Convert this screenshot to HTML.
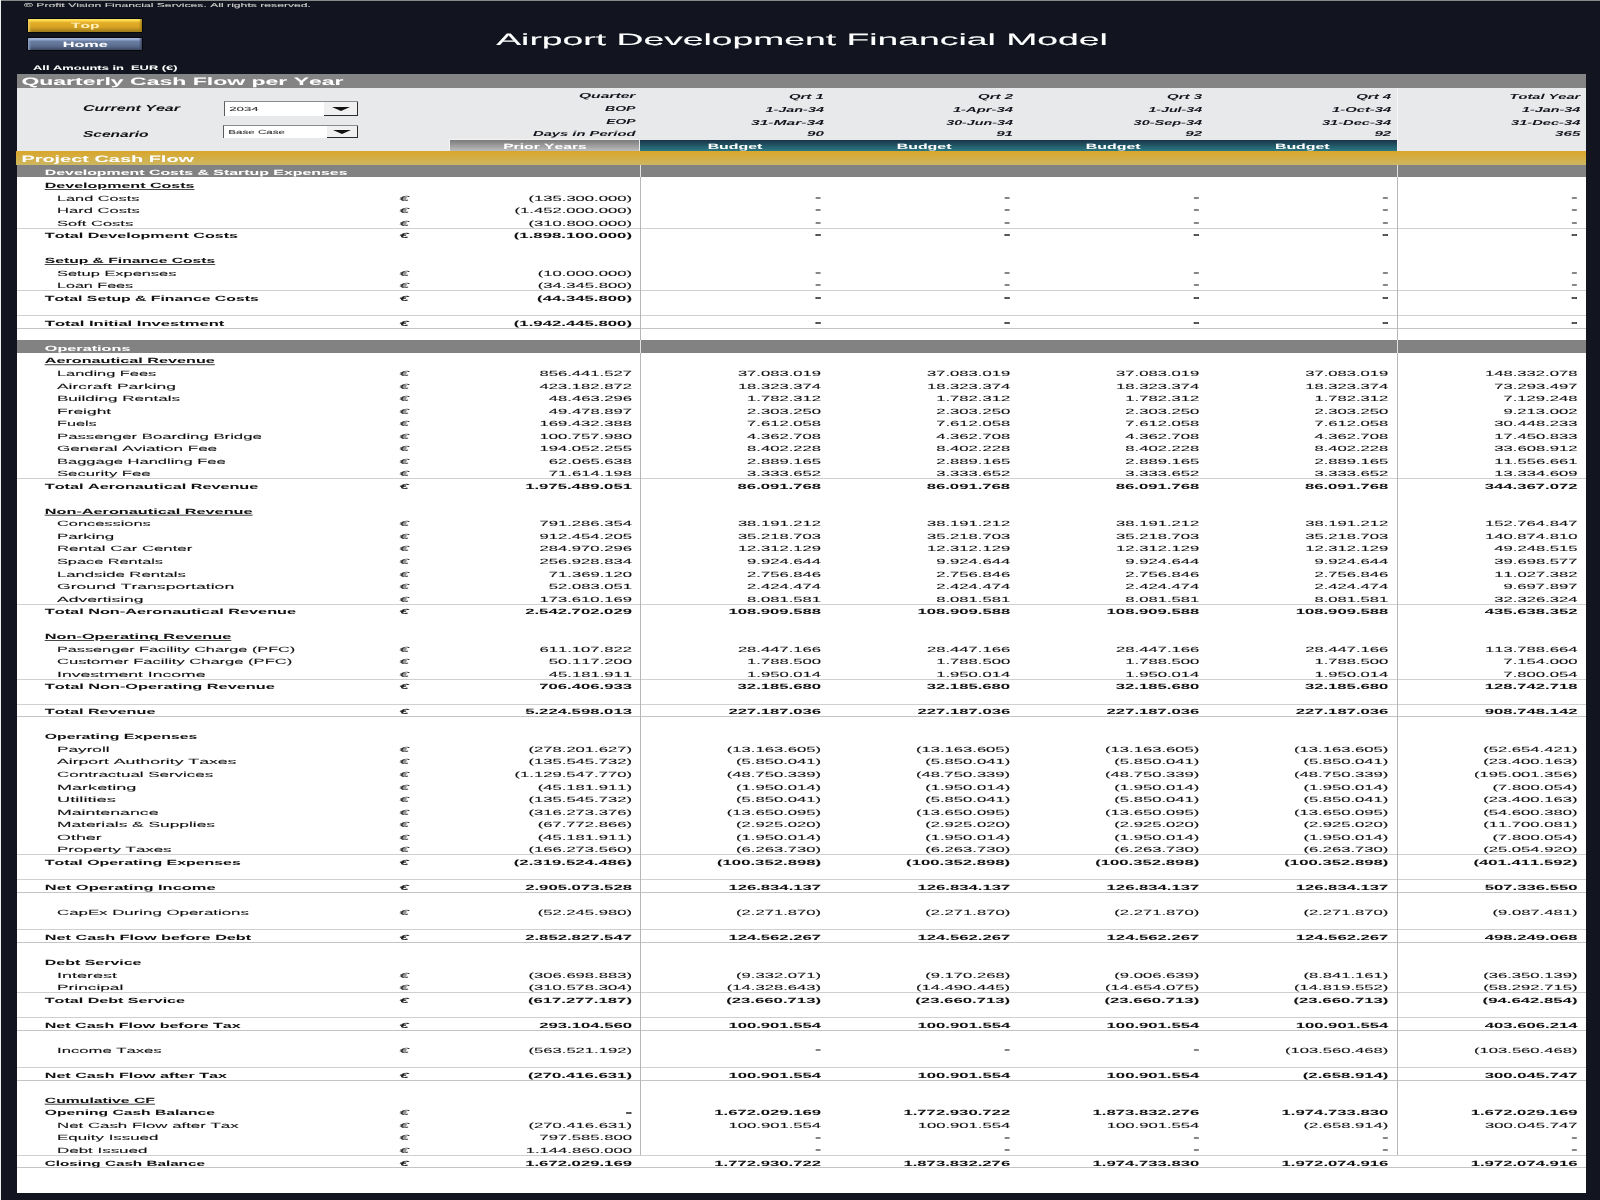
<!DOCTYPE html>
<html lang="en"><head><meta charset="utf-8"><title>Airport Development Financial Model</title>
<style>
html,body{margin:0;padding:0}
body{width:1600px;height:1200px;background:#12151f;position:relative;overflow:hidden;font-family:"Liberation Sans",sans-serif}
#shapes div{position:absolute}
.btn{position:absolute;left:27.8px;width:114.6px;border-radius:1px}
#top{top:18.5px;height:13.4px;background:linear-gradient(#ffec7a 0,#ffd94a 12%,#e3ae2a 28%,#d9a322 62%,#b98f20 80%,#96761a 100%);box-shadow:inset 2.5px 0 2px -1px #f3d060,inset -2.5px 0 2px -1px #a07c18,0 0 0 1px #06070b}
#home{top:37.7px;height:12.6px;background:linear-gradient(#b4c6ea 0,#98acd4 12%,#6b7fa3 28%,#5f7193 60%,#4f5f7d 82%,#36415a 100%);box-shadow:inset 2.5px 0 2px -1px #8fa2c6,inset -2.5px 0 2px -1px #3a4661,0 0 0 1px #06070b}
.dd{position:absolute;background:#fff;box-sizing:border-box;border-top:1px solid #8c8c8c;border-left:1px solid #5c5c5c}
.dd i{position:absolute;right:0;top:0;bottom:0;box-sizing:border-box;background:#f0f0f0;border-right:1.4px solid #2c2c2c;border-bottom:1px solid #2c2c2c}
.dd i:after{content:"";position:absolute;left:50%;top:50%;margin:-1.4px 0 0 -9px;border-left:9px solid transparent;border-right:9px solid transparent;border-top:4.2px solid #111}
svg{position:absolute;left:0;top:0;will-change:transform}
text{font-family:"Liberation Sans",sans-serif;white-space:pre;font-kerning:none;text-rendering:geometricPrecision;fill:currentColor;stroke:currentColor;stroke-width:.09px}
.b{font-weight:700;stroke-width:.03px}.d{stroke-width:.4px}.b.d{stroke-width:.45px}.i{font-style:italic}.u{text-decoration:underline}
</style></head><body>
<div id="shapes">
<div style="left:17.0px;top:74.0px;width:1569.0px;height:1118.6px;background:#fff"></div>
<div style="left:17.0px;top:88.0px;width:1569.0px;height:63.2px;background:#e8e9eb"></div>
<div style="left:17.0px;top:73.8px;width:1569.0px;height:14.4px;background:#848484"></div>
<div style="left:1397.0px;top:88.6px;width:1.0px;height:62.6px;background:#f6f6f6"></div>
<div style="left:0.0px;top:0.0px;width:1600.0px;height:1.0px;background:#8a8a8a"></div>
<div style="left:0.0px;top:0.0px;width:1.1px;height:1200.0px;background:#ededed"></div>
<div style="left:450.4px;top:139.9px;width:189.1px;height:11.4px;background:linear-gradient(#7b7b7b,#bcbcbc);box-shadow:-1px -1px 0 #f4f4f4"></div>
<div style="left:639.5px;top:139.8px;width:757.2px;height:11.5px;background:linear-gradient(#1a3348,#2a7a84)"></div>
<div style="left:16.0px;top:151.1px;width:1570.0px;height:14.0px;background:linear-gradient(#d9a62a,#d2b04a 60%,#ccb763)"></div>
<div style="left:17.0px;top:165.1px;width:1569.0px;height:12.0px;background:#828282"></div>
<div style="left:17.0px;top:340.0px;width:1569.0px;height:12.7px;background:#828282"></div>
<div style="left:17.0px;top:228.0px;width:1569.0px;height:1.0px;background:#d0d0d0"></div>
<div style="left:17.0px;top:290.0px;width:1569.0px;height:1.0px;background:#d0d0d0"></div>
<div style="left:17.0px;top:315.0px;width:1569.0px;height:1.0px;background:#d0d0d0"></div>
<div style="left:17.0px;top:478.0px;width:1569.0px;height:1.0px;background:#d0d0d0"></div>
<div style="left:17.0px;top:604.0px;width:1569.0px;height:1.0px;background:#d0d0d0"></div>
<div style="left:17.0px;top:679.0px;width:1569.0px;height:1.0px;background:#d0d0d0"></div>
<div style="left:17.0px;top:704.0px;width:1569.0px;height:1.0px;background:#d0d0d0"></div>
<div style="left:17.0px;top:854.0px;width:1569.0px;height:1.0px;background:#d0d0d0"></div>
<div style="left:17.0px;top:879.0px;width:1569.0px;height:1.0px;background:#d0d0d0"></div>
<div style="left:17.0px;top:929.0px;width:1569.0px;height:1.0px;background:#d0d0d0"></div>
<div style="left:17.0px;top:992.0px;width:1569.0px;height:1.0px;background:#d0d0d0"></div>
<div style="left:17.0px;top:1017.0px;width:1569.0px;height:1.0px;background:#d0d0d0"></div>
<div style="left:17.0px;top:1067.0px;width:1569.0px;height:1.0px;background:#d0d0d0"></div>
<div style="left:17.0px;top:1155.0px;width:1569.0px;height:1.0px;background:#d0d0d0"></div>
<div style="left:17.0px;top:328.0px;width:1569.0px;height:1.0px;background:#c4c4c4"></div>
<div style="left:17.0px;top:716.0px;width:1569.0px;height:1.0px;background:#c4c4c4"></div>
<div style="left:17.0px;top:892.0px;width:1569.0px;height:1.0px;background:#c4c4c4"></div>
<div style="left:17.0px;top:942.0px;width:1569.0px;height:1.0px;background:#c4c4c4"></div>
<div style="left:17.0px;top:1030.0px;width:1569.0px;height:1.0px;background:#c4c4c4"></div>
<div style="left:17.0px;top:1080.0px;width:1569.0px;height:1.0px;background:#c4c4c4"></div>
<div style="left:17.0px;top:1167.0px;width:1569.0px;height:1.0px;background:#c4c4c4"></div>
<div style="left:640.0px;top:177.1px;width:1.0px;height:977.9px;background:#b6b6b6"></div>
<div style="left:640.0px;top:165.1px;width:1.0px;height:12.0px;background:#e4e4e4"></div>
<div style="left:640.0px;top:340.0px;width:1.0px;height:12.7px;background:#e4e4e4"></div>
<div style="left:1397.0px;top:177.1px;width:1.0px;height:977.9px;background:#b6b6b6"></div>
<div style="left:1397.0px;top:165.1px;width:1.0px;height:12.0px;background:#e4e4e4"></div>
<div style="left:1397.0px;top:340.0px;width:1.0px;height:12.7px;background:#e4e4e4"></div>
</div>
<div class="btn" id="top"></div><div class="btn" id="home"></div>
<div class="dd" style="left:224px;top:100.8px;width:134.4px;height:14.8px"><i style="width:34.2px"></i></div>
<div class="dd" style="left:223px;top:124.6px;width:135.4px;height:13.4px"><i style="width:31px"></i></div>
<svg width="1600" height="1200" viewBox="0 0 1600 1200" font-size="7.6" color="#111" lengthAdjust="spacingAndGlyphs" xml:space="preserve">
<text lengthAdjust="spacingAndGlyphs" x="44.8" y="188.0" textLength="149.7" class="b u">Development Costs</text>
<text lengthAdjust="spacingAndGlyphs" x="57.0" y="200.5" textLength="82.3">Land Costs</text>
<text lengthAdjust="spacingAndGlyphs" x="404.2" y="200.5" textLength="9.4" text-anchor="middle" class="i" color="#222">€</text>
<text lengthAdjust="spacingAndGlyphs" x="632.0" y="200.5" textLength="103.5" text-anchor="end">(135.300.000)</text>
<text lengthAdjust="spacingAndGlyphs" x="820.9" y="199.7" textLength="5.7" text-anchor="end" class="d" color="#4a4a4a">-</text>
<text lengthAdjust="spacingAndGlyphs" x="1010.0" y="199.7" textLength="5.7" text-anchor="end" class="d" color="#4a4a4a">-</text>
<text lengthAdjust="spacingAndGlyphs" x="1199.1" y="199.7" textLength="5.7" text-anchor="end" class="d" color="#4a4a4a">-</text>
<text lengthAdjust="spacingAndGlyphs" x="1388.2" y="199.7" textLength="5.7" text-anchor="end" class="d" color="#4a4a4a">-</text>
<text lengthAdjust="spacingAndGlyphs" x="1577.3" y="199.7" textLength="5.7" text-anchor="end" class="d" color="#4a4a4a">-</text>
<text lengthAdjust="spacingAndGlyphs" x="57.0" y="213.0" textLength="82.8">Hard Costs</text>
<text lengthAdjust="spacingAndGlyphs" x="404.2" y="213.0" textLength="9.4" text-anchor="middle" class="i" color="#222">€</text>
<text lengthAdjust="spacingAndGlyphs" x="632.0" y="213.0" textLength="117.4" text-anchor="end">(1.452.000.000)</text>
<text lengthAdjust="spacingAndGlyphs" x="820.9" y="212.2" textLength="5.7" text-anchor="end" class="d" color="#4a4a4a">-</text>
<text lengthAdjust="spacingAndGlyphs" x="1010.0" y="212.2" textLength="5.7" text-anchor="end" class="d" color="#4a4a4a">-</text>
<text lengthAdjust="spacingAndGlyphs" x="1199.1" y="212.2" textLength="5.7" text-anchor="end" class="d" color="#4a4a4a">-</text>
<text lengthAdjust="spacingAndGlyphs" x="1388.2" y="212.2" textLength="5.7" text-anchor="end" class="d" color="#4a4a4a">-</text>
<text lengthAdjust="spacingAndGlyphs" x="1577.3" y="212.2" textLength="5.7" text-anchor="end" class="d" color="#4a4a4a">-</text>
<text lengthAdjust="spacingAndGlyphs" x="57.0" y="225.6" textLength="76.2">Soft Costs</text>
<text lengthAdjust="spacingAndGlyphs" x="404.2" y="225.6" textLength="9.4" text-anchor="middle" class="i" color="#222">€</text>
<text lengthAdjust="spacingAndGlyphs" x="632.0" y="225.6" textLength="103.5" text-anchor="end">(310.800.000)</text>
<text lengthAdjust="spacingAndGlyphs" x="820.9" y="224.8" textLength="5.7" text-anchor="end" class="d" color="#4a4a4a">-</text>
<text lengthAdjust="spacingAndGlyphs" x="1010.0" y="224.8" textLength="5.7" text-anchor="end" class="d" color="#4a4a4a">-</text>
<text lengthAdjust="spacingAndGlyphs" x="1199.1" y="224.8" textLength="5.7" text-anchor="end" class="d" color="#4a4a4a">-</text>
<text lengthAdjust="spacingAndGlyphs" x="1388.2" y="224.8" textLength="5.7" text-anchor="end" class="d" color="#4a4a4a">-</text>
<text lengthAdjust="spacingAndGlyphs" x="1577.3" y="224.8" textLength="5.7" text-anchor="end" class="d" color="#4a4a4a">-</text>
<text lengthAdjust="spacingAndGlyphs" x="44.8" y="238.1" textLength="193.2" class="b">Total Development Costs</text>
<text lengthAdjust="spacingAndGlyphs" x="404.2" y="238.1" textLength="9.4" text-anchor="middle" class="b i" color="#222">€</text>
<text lengthAdjust="spacingAndGlyphs" x="632.0" y="238.1" textLength="118.2" text-anchor="end" class="b">(1.898.100.000)</text>
<text lengthAdjust="spacingAndGlyphs" x="820.9" y="237.3" textLength="5.7" text-anchor="end" class="b d" color="#1a1a1a">-</text>
<text lengthAdjust="spacingAndGlyphs" x="1010.0" y="237.3" textLength="5.7" text-anchor="end" class="b d" color="#1a1a1a">-</text>
<text lengthAdjust="spacingAndGlyphs" x="1199.1" y="237.3" textLength="5.7" text-anchor="end" class="b d" color="#1a1a1a">-</text>
<text lengthAdjust="spacingAndGlyphs" x="1388.2" y="237.3" textLength="5.7" text-anchor="end" class="b d" color="#1a1a1a">-</text>
<text lengthAdjust="spacingAndGlyphs" x="1577.3" y="237.3" textLength="5.7" text-anchor="end" class="b d" color="#1a1a1a">-</text>
<text lengthAdjust="spacingAndGlyphs" x="44.8" y="263.2" textLength="170.4" class="b u">Setup &amp; Finance Costs</text>
<text lengthAdjust="spacingAndGlyphs" x="57.0" y="275.7" textLength="119.4">Setup Expenses</text>
<text lengthAdjust="spacingAndGlyphs" x="404.2" y="275.7" textLength="9.4" text-anchor="middle" class="i" color="#222">€</text>
<text lengthAdjust="spacingAndGlyphs" x="632.0" y="275.7" textLength="94.3" text-anchor="end">(10.000.000)</text>
<text lengthAdjust="spacingAndGlyphs" x="820.9" y="274.9" textLength="5.7" text-anchor="end" class="d" color="#4a4a4a">-</text>
<text lengthAdjust="spacingAndGlyphs" x="1010.0" y="274.9" textLength="5.7" text-anchor="end" class="d" color="#4a4a4a">-</text>
<text lengthAdjust="spacingAndGlyphs" x="1199.1" y="274.9" textLength="5.7" text-anchor="end" class="d" color="#4a4a4a">-</text>
<text lengthAdjust="spacingAndGlyphs" x="1388.2" y="274.9" textLength="5.7" text-anchor="end" class="d" color="#4a4a4a">-</text>
<text lengthAdjust="spacingAndGlyphs" x="1577.3" y="274.9" textLength="5.7" text-anchor="end" class="d" color="#4a4a4a">-</text>
<text lengthAdjust="spacingAndGlyphs" x="57.0" y="288.2" textLength="76.1">Loan Fees</text>
<text lengthAdjust="spacingAndGlyphs" x="404.2" y="288.2" textLength="9.4" text-anchor="middle" class="i" color="#222">€</text>
<text lengthAdjust="spacingAndGlyphs" x="632.0" y="288.2" textLength="94.3" text-anchor="end">(34.345.800)</text>
<text lengthAdjust="spacingAndGlyphs" x="820.9" y="287.4" textLength="5.7" text-anchor="end" class="d" color="#4a4a4a">-</text>
<text lengthAdjust="spacingAndGlyphs" x="1010.0" y="287.4" textLength="5.7" text-anchor="end" class="d" color="#4a4a4a">-</text>
<text lengthAdjust="spacingAndGlyphs" x="1199.1" y="287.4" textLength="5.7" text-anchor="end" class="d" color="#4a4a4a">-</text>
<text lengthAdjust="spacingAndGlyphs" x="1388.2" y="287.4" textLength="5.7" text-anchor="end" class="d" color="#4a4a4a">-</text>
<text lengthAdjust="spacingAndGlyphs" x="1577.3" y="287.4" textLength="5.7" text-anchor="end" class="d" color="#4a4a4a">-</text>
<text lengthAdjust="spacingAndGlyphs" x="44.8" y="300.8" textLength="213.9" class="b">Total Setup &amp; Finance Costs</text>
<text lengthAdjust="spacingAndGlyphs" x="404.2" y="300.8" textLength="9.4" text-anchor="middle" class="b i" color="#222">€</text>
<text lengthAdjust="spacingAndGlyphs" x="632.0" y="300.8" textLength="94.9" text-anchor="end" class="b">(44.345.800)</text>
<text lengthAdjust="spacingAndGlyphs" x="820.9" y="300.0" textLength="5.7" text-anchor="end" class="b d" color="#1a1a1a">-</text>
<text lengthAdjust="spacingAndGlyphs" x="1010.0" y="300.0" textLength="5.7" text-anchor="end" class="b d" color="#1a1a1a">-</text>
<text lengthAdjust="spacingAndGlyphs" x="1199.1" y="300.0" textLength="5.7" text-anchor="end" class="b d" color="#1a1a1a">-</text>
<text lengthAdjust="spacingAndGlyphs" x="1388.2" y="300.0" textLength="5.7" text-anchor="end" class="b d" color="#1a1a1a">-</text>
<text lengthAdjust="spacingAndGlyphs" x="1577.3" y="300.0" textLength="5.7" text-anchor="end" class="b d" color="#1a1a1a">-</text>
<text lengthAdjust="spacingAndGlyphs" x="44.8" y="325.8" textLength="179.5" class="b">Total Initial Investment</text>
<text lengthAdjust="spacingAndGlyphs" x="404.2" y="325.8" textLength="9.4" text-anchor="middle" class="b i" color="#222">€</text>
<text lengthAdjust="spacingAndGlyphs" x="632.0" y="325.8" textLength="118.2" text-anchor="end" class="b">(1.942.445.800)</text>
<text lengthAdjust="spacingAndGlyphs" x="820.9" y="325.0" textLength="5.7" text-anchor="end" class="b d" color="#1a1a1a">-</text>
<text lengthAdjust="spacingAndGlyphs" x="1010.0" y="325.0" textLength="5.7" text-anchor="end" class="b d" color="#1a1a1a">-</text>
<text lengthAdjust="spacingAndGlyphs" x="1199.1" y="325.0" textLength="5.7" text-anchor="end" class="b d" color="#1a1a1a">-</text>
<text lengthAdjust="spacingAndGlyphs" x="1388.2" y="325.0" textLength="5.7" text-anchor="end" class="b d" color="#1a1a1a">-</text>
<text lengthAdjust="spacingAndGlyphs" x="1577.3" y="325.0" textLength="5.7" text-anchor="end" class="b d" color="#1a1a1a">-</text>
<text lengthAdjust="spacingAndGlyphs" x="44.8" y="363.4" textLength="170.0" class="b u">Aeronautical Revenue</text>
<text lengthAdjust="spacingAndGlyphs" x="57.0" y="375.9" textLength="99.2">Landing Fees</text>
<text lengthAdjust="spacingAndGlyphs" x="404.2" y="375.9" textLength="9.4" text-anchor="middle" class="i" color="#222">€</text>
<text lengthAdjust="spacingAndGlyphs" x="632.0" y="375.9" textLength="92.5" text-anchor="end">856.441.527</text>
<text lengthAdjust="spacingAndGlyphs" x="821.1" y="375.9" textLength="83.2" text-anchor="end">37.083.019</text>
<text lengthAdjust="spacingAndGlyphs" x="1010.2" y="375.9" textLength="83.2" text-anchor="end">37.083.019</text>
<text lengthAdjust="spacingAndGlyphs" x="1199.3" y="375.9" textLength="83.2" text-anchor="end">37.083.019</text>
<text lengthAdjust="spacingAndGlyphs" x="1388.4" y="375.9" textLength="83.2" text-anchor="end">37.083.019</text>
<text lengthAdjust="spacingAndGlyphs" x="1577.5" y="375.9" textLength="92.5" text-anchor="end">148.332.078</text>
<text lengthAdjust="spacingAndGlyphs" x="57.0" y="388.5" textLength="119.0">Aircraft Parking</text>
<text lengthAdjust="spacingAndGlyphs" x="404.2" y="388.5" textLength="9.4" text-anchor="middle" class="i" color="#222">€</text>
<text lengthAdjust="spacingAndGlyphs" x="632.0" y="388.5" textLength="92.5" text-anchor="end">423.182.872</text>
<text lengthAdjust="spacingAndGlyphs" x="821.1" y="388.5" textLength="83.2" text-anchor="end">18.323.374</text>
<text lengthAdjust="spacingAndGlyphs" x="1010.2" y="388.5" textLength="83.2" text-anchor="end">18.323.374</text>
<text lengthAdjust="spacingAndGlyphs" x="1199.3" y="388.5" textLength="83.2" text-anchor="end">18.323.374</text>
<text lengthAdjust="spacingAndGlyphs" x="1388.4" y="388.5" textLength="83.2" text-anchor="end">18.323.374</text>
<text lengthAdjust="spacingAndGlyphs" x="1577.5" y="388.5" textLength="83.2" text-anchor="end">73.293.497</text>
<text lengthAdjust="spacingAndGlyphs" x="57.0" y="401.0" textLength="123.0">Building Rentals</text>
<text lengthAdjust="spacingAndGlyphs" x="404.2" y="401.0" textLength="9.4" text-anchor="middle" class="i" color="#222">€</text>
<text lengthAdjust="spacingAndGlyphs" x="632.0" y="401.0" textLength="83.2" text-anchor="end">48.463.296</text>
<text lengthAdjust="spacingAndGlyphs" x="821.1" y="401.0" textLength="74.0" text-anchor="end">1.782.312</text>
<text lengthAdjust="spacingAndGlyphs" x="1010.2" y="401.0" textLength="74.0" text-anchor="end">1.782.312</text>
<text lengthAdjust="spacingAndGlyphs" x="1199.3" y="401.0" textLength="74.0" text-anchor="end">1.782.312</text>
<text lengthAdjust="spacingAndGlyphs" x="1388.4" y="401.0" textLength="74.0" text-anchor="end">1.782.312</text>
<text lengthAdjust="spacingAndGlyphs" x="1577.5" y="401.0" textLength="74.0" text-anchor="end">7.129.248</text>
<text lengthAdjust="spacingAndGlyphs" x="57.0" y="413.5" textLength="54.2">Freight</text>
<text lengthAdjust="spacingAndGlyphs" x="404.2" y="413.5" textLength="9.4" text-anchor="middle" class="i" color="#222">€</text>
<text lengthAdjust="spacingAndGlyphs" x="632.0" y="413.5" textLength="83.2" text-anchor="end">49.478.897</text>
<text lengthAdjust="spacingAndGlyphs" x="821.1" y="413.5" textLength="74.0" text-anchor="end">2.303.250</text>
<text lengthAdjust="spacingAndGlyphs" x="1010.2" y="413.5" textLength="74.0" text-anchor="end">2.303.250</text>
<text lengthAdjust="spacingAndGlyphs" x="1199.3" y="413.5" textLength="74.0" text-anchor="end">2.303.250</text>
<text lengthAdjust="spacingAndGlyphs" x="1388.4" y="413.5" textLength="74.0" text-anchor="end">2.303.250</text>
<text lengthAdjust="spacingAndGlyphs" x="1577.5" y="413.5" textLength="74.0" text-anchor="end">9.213.002</text>
<text lengthAdjust="spacingAndGlyphs" x="57.0" y="426.1" textLength="39.7">Fuels</text>
<text lengthAdjust="spacingAndGlyphs" x="404.2" y="426.1" textLength="9.4" text-anchor="middle" class="i" color="#222">€</text>
<text lengthAdjust="spacingAndGlyphs" x="632.0" y="426.1" textLength="92.5" text-anchor="end">169.432.388</text>
<text lengthAdjust="spacingAndGlyphs" x="821.1" y="426.1" textLength="74.0" text-anchor="end">7.612.058</text>
<text lengthAdjust="spacingAndGlyphs" x="1010.2" y="426.1" textLength="74.0" text-anchor="end">7.612.058</text>
<text lengthAdjust="spacingAndGlyphs" x="1199.3" y="426.1" textLength="74.0" text-anchor="end">7.612.058</text>
<text lengthAdjust="spacingAndGlyphs" x="1388.4" y="426.1" textLength="74.0" text-anchor="end">7.612.058</text>
<text lengthAdjust="spacingAndGlyphs" x="1577.5" y="426.1" textLength="83.2" text-anchor="end">30.448.233</text>
<text lengthAdjust="spacingAndGlyphs" x="57.0" y="438.6" textLength="204.8">Passenger Boarding Bridge</text>
<text lengthAdjust="spacingAndGlyphs" x="404.2" y="438.6" textLength="9.4" text-anchor="middle" class="i" color="#222">€</text>
<text lengthAdjust="spacingAndGlyphs" x="632.0" y="438.6" textLength="92.5" text-anchor="end">100.757.980</text>
<text lengthAdjust="spacingAndGlyphs" x="821.1" y="438.6" textLength="74.0" text-anchor="end">4.362.708</text>
<text lengthAdjust="spacingAndGlyphs" x="1010.2" y="438.6" textLength="74.0" text-anchor="end">4.362.708</text>
<text lengthAdjust="spacingAndGlyphs" x="1199.3" y="438.6" textLength="74.0" text-anchor="end">4.362.708</text>
<text lengthAdjust="spacingAndGlyphs" x="1388.4" y="438.6" textLength="74.0" text-anchor="end">4.362.708</text>
<text lengthAdjust="spacingAndGlyphs" x="1577.5" y="438.6" textLength="83.2" text-anchor="end">17.450.833</text>
<text lengthAdjust="spacingAndGlyphs" x="57.0" y="451.1" textLength="160.1">General Aviation Fee</text>
<text lengthAdjust="spacingAndGlyphs" x="404.2" y="451.1" textLength="9.4" text-anchor="middle" class="i" color="#222">€</text>
<text lengthAdjust="spacingAndGlyphs" x="632.0" y="451.1" textLength="92.5" text-anchor="end">194.052.255</text>
<text lengthAdjust="spacingAndGlyphs" x="821.1" y="451.1" textLength="74.0" text-anchor="end">8.402.228</text>
<text lengthAdjust="spacingAndGlyphs" x="1010.2" y="451.1" textLength="74.0" text-anchor="end">8.402.228</text>
<text lengthAdjust="spacingAndGlyphs" x="1199.3" y="451.1" textLength="74.0" text-anchor="end">8.402.228</text>
<text lengthAdjust="spacingAndGlyphs" x="1388.4" y="451.1" textLength="74.0" text-anchor="end">8.402.228</text>
<text lengthAdjust="spacingAndGlyphs" x="1577.5" y="451.1" textLength="83.2" text-anchor="end">33.608.912</text>
<text lengthAdjust="spacingAndGlyphs" x="57.0" y="463.7" textLength="168.7">Baggage Handling Fee</text>
<text lengthAdjust="spacingAndGlyphs" x="404.2" y="463.7" textLength="9.4" text-anchor="middle" class="i" color="#222">€</text>
<text lengthAdjust="spacingAndGlyphs" x="632.0" y="463.7" textLength="83.2" text-anchor="end">62.065.638</text>
<text lengthAdjust="spacingAndGlyphs" x="821.1" y="463.7" textLength="74.0" text-anchor="end">2.889.165</text>
<text lengthAdjust="spacingAndGlyphs" x="1010.2" y="463.7" textLength="74.0" text-anchor="end">2.889.165</text>
<text lengthAdjust="spacingAndGlyphs" x="1199.3" y="463.7" textLength="74.0" text-anchor="end">2.889.165</text>
<text lengthAdjust="spacingAndGlyphs" x="1388.4" y="463.7" textLength="74.0" text-anchor="end">2.889.165</text>
<text lengthAdjust="spacingAndGlyphs" x="1577.5" y="463.7" textLength="83.2" text-anchor="end">11.556.661</text>
<text lengthAdjust="spacingAndGlyphs" x="57.0" y="476.2" textLength="93.6">Security Fee</text>
<text lengthAdjust="spacingAndGlyphs" x="404.2" y="476.2" textLength="9.4" text-anchor="middle" class="i" color="#222">€</text>
<text lengthAdjust="spacingAndGlyphs" x="632.0" y="476.2" textLength="83.2" text-anchor="end">71.614.198</text>
<text lengthAdjust="spacingAndGlyphs" x="821.1" y="476.2" textLength="74.0" text-anchor="end">3.333.652</text>
<text lengthAdjust="spacingAndGlyphs" x="1010.2" y="476.2" textLength="74.0" text-anchor="end">3.333.652</text>
<text lengthAdjust="spacingAndGlyphs" x="1199.3" y="476.2" textLength="74.0" text-anchor="end">3.333.652</text>
<text lengthAdjust="spacingAndGlyphs" x="1388.4" y="476.2" textLength="74.0" text-anchor="end">3.333.652</text>
<text lengthAdjust="spacingAndGlyphs" x="1577.5" y="476.2" textLength="83.2" text-anchor="end">13.334.609</text>
<text lengthAdjust="spacingAndGlyphs" x="44.8" y="488.7" textLength="213.5" class="b">Total Aeronautical Revenue</text>
<text lengthAdjust="spacingAndGlyphs" x="404.2" y="488.7" textLength="9.4" text-anchor="middle" class="b i" color="#222">€</text>
<text lengthAdjust="spacingAndGlyphs" x="632.0" y="488.7" textLength="106.8" text-anchor="end" class="b">1.975.489.051</text>
<text lengthAdjust="spacingAndGlyphs" x="821.1" y="488.7" textLength="83.5" text-anchor="end" class="b">86.091.768</text>
<text lengthAdjust="spacingAndGlyphs" x="1010.2" y="488.7" textLength="83.5" text-anchor="end" class="b">86.091.768</text>
<text lengthAdjust="spacingAndGlyphs" x="1199.3" y="488.7" textLength="83.5" text-anchor="end" class="b">86.091.768</text>
<text lengthAdjust="spacingAndGlyphs" x="1388.4" y="488.7" textLength="83.5" text-anchor="end" class="b">86.091.768</text>
<text lengthAdjust="spacingAndGlyphs" x="1577.5" y="488.7" textLength="92.7" text-anchor="end" class="b">344.367.072</text>
<text lengthAdjust="spacingAndGlyphs" x="44.8" y="513.8" textLength="207.8" class="b u">Non-Aeronautical Revenue</text>
<text lengthAdjust="spacingAndGlyphs" x="57.0" y="526.3" textLength="93.8">Concessions</text>
<text lengthAdjust="spacingAndGlyphs" x="404.2" y="526.3" textLength="9.4" text-anchor="middle" class="i" color="#222">€</text>
<text lengthAdjust="spacingAndGlyphs" x="632.0" y="526.3" textLength="92.5" text-anchor="end">791.286.354</text>
<text lengthAdjust="spacingAndGlyphs" x="821.1" y="526.3" textLength="83.2" text-anchor="end">38.191.212</text>
<text lengthAdjust="spacingAndGlyphs" x="1010.2" y="526.3" textLength="83.2" text-anchor="end">38.191.212</text>
<text lengthAdjust="spacingAndGlyphs" x="1199.3" y="526.3" textLength="83.2" text-anchor="end">38.191.212</text>
<text lengthAdjust="spacingAndGlyphs" x="1388.4" y="526.3" textLength="83.2" text-anchor="end">38.191.212</text>
<text lengthAdjust="spacingAndGlyphs" x="1577.5" y="526.3" textLength="92.5" text-anchor="end">152.764.847</text>
<text lengthAdjust="spacingAndGlyphs" x="57.0" y="538.9" textLength="57.2">Parking</text>
<text lengthAdjust="spacingAndGlyphs" x="404.2" y="538.9" textLength="9.4" text-anchor="middle" class="i" color="#222">€</text>
<text lengthAdjust="spacingAndGlyphs" x="632.0" y="538.9" textLength="92.5" text-anchor="end">912.454.205</text>
<text lengthAdjust="spacingAndGlyphs" x="821.1" y="538.9" textLength="83.2" text-anchor="end">35.218.703</text>
<text lengthAdjust="spacingAndGlyphs" x="1010.2" y="538.9" textLength="83.2" text-anchor="end">35.218.703</text>
<text lengthAdjust="spacingAndGlyphs" x="1199.3" y="538.9" textLength="83.2" text-anchor="end">35.218.703</text>
<text lengthAdjust="spacingAndGlyphs" x="1388.4" y="538.9" textLength="83.2" text-anchor="end">35.218.703</text>
<text lengthAdjust="spacingAndGlyphs" x="1577.5" y="538.9" textLength="92.5" text-anchor="end">140.874.810</text>
<text lengthAdjust="spacingAndGlyphs" x="57.0" y="551.4" textLength="135.3">Rental Car Center</text>
<text lengthAdjust="spacingAndGlyphs" x="404.2" y="551.4" textLength="9.4" text-anchor="middle" class="i" color="#222">€</text>
<text lengthAdjust="spacingAndGlyphs" x="632.0" y="551.4" textLength="92.5" text-anchor="end">284.970.296</text>
<text lengthAdjust="spacingAndGlyphs" x="821.1" y="551.4" textLength="83.2" text-anchor="end">12.312.129</text>
<text lengthAdjust="spacingAndGlyphs" x="1010.2" y="551.4" textLength="83.2" text-anchor="end">12.312.129</text>
<text lengthAdjust="spacingAndGlyphs" x="1199.3" y="551.4" textLength="83.2" text-anchor="end">12.312.129</text>
<text lengthAdjust="spacingAndGlyphs" x="1388.4" y="551.4" textLength="83.2" text-anchor="end">12.312.129</text>
<text lengthAdjust="spacingAndGlyphs" x="1577.5" y="551.4" textLength="83.2" text-anchor="end">49.248.515</text>
<text lengthAdjust="spacingAndGlyphs" x="57.0" y="563.9" textLength="106.0">Space Rentals</text>
<text lengthAdjust="spacingAndGlyphs" x="404.2" y="563.9" textLength="9.4" text-anchor="middle" class="i" color="#222">€</text>
<text lengthAdjust="spacingAndGlyphs" x="632.0" y="563.9" textLength="92.5" text-anchor="end">256.928.834</text>
<text lengthAdjust="spacingAndGlyphs" x="821.1" y="563.9" textLength="74.0" text-anchor="end">9.924.644</text>
<text lengthAdjust="spacingAndGlyphs" x="1010.2" y="563.9" textLength="74.0" text-anchor="end">9.924.644</text>
<text lengthAdjust="spacingAndGlyphs" x="1199.3" y="563.9" textLength="74.0" text-anchor="end">9.924.644</text>
<text lengthAdjust="spacingAndGlyphs" x="1388.4" y="563.9" textLength="74.0" text-anchor="end">9.924.644</text>
<text lengthAdjust="spacingAndGlyphs" x="1577.5" y="563.9" textLength="83.2" text-anchor="end">39.698.577</text>
<text lengthAdjust="spacingAndGlyphs" x="57.0" y="576.5" textLength="128.9">Landside Rentals</text>
<text lengthAdjust="spacingAndGlyphs" x="404.2" y="576.5" textLength="9.4" text-anchor="middle" class="i" color="#222">€</text>
<text lengthAdjust="spacingAndGlyphs" x="632.0" y="576.5" textLength="83.2" text-anchor="end">71.369.120</text>
<text lengthAdjust="spacingAndGlyphs" x="821.1" y="576.5" textLength="74.0" text-anchor="end">2.756.846</text>
<text lengthAdjust="spacingAndGlyphs" x="1010.2" y="576.5" textLength="74.0" text-anchor="end">2.756.846</text>
<text lengthAdjust="spacingAndGlyphs" x="1199.3" y="576.5" textLength="74.0" text-anchor="end">2.756.846</text>
<text lengthAdjust="spacingAndGlyphs" x="1388.4" y="576.5" textLength="74.0" text-anchor="end">2.756.846</text>
<text lengthAdjust="spacingAndGlyphs" x="1577.5" y="576.5" textLength="83.2" text-anchor="end">11.027.382</text>
<text lengthAdjust="spacingAndGlyphs" x="57.0" y="589.0" textLength="177.2">Ground Transportation</text>
<text lengthAdjust="spacingAndGlyphs" x="404.2" y="589.0" textLength="9.4" text-anchor="middle" class="i" color="#222">€</text>
<text lengthAdjust="spacingAndGlyphs" x="632.0" y="589.0" textLength="83.2" text-anchor="end">52.083.051</text>
<text lengthAdjust="spacingAndGlyphs" x="821.1" y="589.0" textLength="74.0" text-anchor="end">2.424.474</text>
<text lengthAdjust="spacingAndGlyphs" x="1010.2" y="589.0" textLength="74.0" text-anchor="end">2.424.474</text>
<text lengthAdjust="spacingAndGlyphs" x="1199.3" y="589.0" textLength="74.0" text-anchor="end">2.424.474</text>
<text lengthAdjust="spacingAndGlyphs" x="1388.4" y="589.0" textLength="74.0" text-anchor="end">2.424.474</text>
<text lengthAdjust="spacingAndGlyphs" x="1577.5" y="589.0" textLength="74.0" text-anchor="end">9.697.897</text>
<text lengthAdjust="spacingAndGlyphs" x="57.0" y="601.5" textLength="86.6">Advertising</text>
<text lengthAdjust="spacingAndGlyphs" x="404.2" y="601.5" textLength="9.4" text-anchor="middle" class="i" color="#222">€</text>
<text lengthAdjust="spacingAndGlyphs" x="632.0" y="601.5" textLength="92.5" text-anchor="end">173.610.169</text>
<text lengthAdjust="spacingAndGlyphs" x="821.1" y="601.5" textLength="74.0" text-anchor="end">8.081.581</text>
<text lengthAdjust="spacingAndGlyphs" x="1010.2" y="601.5" textLength="74.0" text-anchor="end">8.081.581</text>
<text lengthAdjust="spacingAndGlyphs" x="1199.3" y="601.5" textLength="74.0" text-anchor="end">8.081.581</text>
<text lengthAdjust="spacingAndGlyphs" x="1388.4" y="601.5" textLength="74.0" text-anchor="end">8.081.581</text>
<text lengthAdjust="spacingAndGlyphs" x="1577.5" y="601.5" textLength="83.2" text-anchor="end">32.326.324</text>
<text lengthAdjust="spacingAndGlyphs" x="44.8" y="614.1" textLength="251.3" class="b">Total Non-Aeronautical Revenue</text>
<text lengthAdjust="spacingAndGlyphs" x="404.2" y="614.1" textLength="9.4" text-anchor="middle" class="b i" color="#222">€</text>
<text lengthAdjust="spacingAndGlyphs" x="632.0" y="614.1" textLength="106.8" text-anchor="end" class="b">2.542.702.029</text>
<text lengthAdjust="spacingAndGlyphs" x="821.1" y="614.1" textLength="92.7" text-anchor="end" class="b">108.909.588</text>
<text lengthAdjust="spacingAndGlyphs" x="1010.2" y="614.1" textLength="92.7" text-anchor="end" class="b">108.909.588</text>
<text lengthAdjust="spacingAndGlyphs" x="1199.3" y="614.1" textLength="92.7" text-anchor="end" class="b">108.909.588</text>
<text lengthAdjust="spacingAndGlyphs" x="1388.4" y="614.1" textLength="92.7" text-anchor="end" class="b">108.909.588</text>
<text lengthAdjust="spacingAndGlyphs" x="1577.5" y="614.1" textLength="92.7" text-anchor="end" class="b">435.638.352</text>
<text lengthAdjust="spacingAndGlyphs" x="44.8" y="639.1" textLength="186.5" class="b u">Non-Operating Revenue</text>
<text lengthAdjust="spacingAndGlyphs" x="57.0" y="651.7" textLength="238.2">Passenger Facility Charge (PFC)</text>
<text lengthAdjust="spacingAndGlyphs" x="404.2" y="651.7" textLength="9.4" text-anchor="middle" class="i" color="#222">€</text>
<text lengthAdjust="spacingAndGlyphs" x="632.0" y="651.7" textLength="92.5" text-anchor="end">611.107.822</text>
<text lengthAdjust="spacingAndGlyphs" x="821.1" y="651.7" textLength="83.2" text-anchor="end">28.447.166</text>
<text lengthAdjust="spacingAndGlyphs" x="1010.2" y="651.7" textLength="83.2" text-anchor="end">28.447.166</text>
<text lengthAdjust="spacingAndGlyphs" x="1199.3" y="651.7" textLength="83.2" text-anchor="end">28.447.166</text>
<text lengthAdjust="spacingAndGlyphs" x="1388.4" y="651.7" textLength="83.2" text-anchor="end">28.447.166</text>
<text lengthAdjust="spacingAndGlyphs" x="1577.5" y="651.7" textLength="92.5" text-anchor="end">113.788.664</text>
<text lengthAdjust="spacingAndGlyphs" x="57.0" y="664.2" textLength="235.2">Customer Facility Charge (PFC)</text>
<text lengthAdjust="spacingAndGlyphs" x="404.2" y="664.2" textLength="9.4" text-anchor="middle" class="i" color="#222">€</text>
<text lengthAdjust="spacingAndGlyphs" x="632.0" y="664.2" textLength="83.2" text-anchor="end">50.117.200</text>
<text lengthAdjust="spacingAndGlyphs" x="821.1" y="664.2" textLength="74.0" text-anchor="end">1.788.500</text>
<text lengthAdjust="spacingAndGlyphs" x="1010.2" y="664.2" textLength="74.0" text-anchor="end">1.788.500</text>
<text lengthAdjust="spacingAndGlyphs" x="1199.3" y="664.2" textLength="74.0" text-anchor="end">1.788.500</text>
<text lengthAdjust="spacingAndGlyphs" x="1388.4" y="664.2" textLength="74.0" text-anchor="end">1.788.500</text>
<text lengthAdjust="spacingAndGlyphs" x="1577.5" y="664.2" textLength="74.0" text-anchor="end">7.154.000</text>
<text lengthAdjust="spacingAndGlyphs" x="57.0" y="676.7" textLength="148.5">Investment Income</text>
<text lengthAdjust="spacingAndGlyphs" x="404.2" y="676.7" textLength="9.4" text-anchor="middle" class="i" color="#222">€</text>
<text lengthAdjust="spacingAndGlyphs" x="632.0" y="676.7" textLength="83.2" text-anchor="end">45.181.911</text>
<text lengthAdjust="spacingAndGlyphs" x="821.1" y="676.7" textLength="74.0" text-anchor="end">1.950.014</text>
<text lengthAdjust="spacingAndGlyphs" x="1010.2" y="676.7" textLength="74.0" text-anchor="end">1.950.014</text>
<text lengthAdjust="spacingAndGlyphs" x="1199.3" y="676.7" textLength="74.0" text-anchor="end">1.950.014</text>
<text lengthAdjust="spacingAndGlyphs" x="1388.4" y="676.7" textLength="74.0" text-anchor="end">1.950.014</text>
<text lengthAdjust="spacingAndGlyphs" x="1577.5" y="676.7" textLength="74.0" text-anchor="end">7.800.054</text>
<text lengthAdjust="spacingAndGlyphs" x="44.8" y="689.2" textLength="230.0" class="b">Total Non-Operating Revenue</text>
<text lengthAdjust="spacingAndGlyphs" x="404.2" y="689.2" textLength="9.4" text-anchor="middle" class="b i" color="#222">€</text>
<text lengthAdjust="spacingAndGlyphs" x="632.0" y="689.2" textLength="92.7" text-anchor="end" class="b">706.406.933</text>
<text lengthAdjust="spacingAndGlyphs" x="821.1" y="689.2" textLength="83.5" text-anchor="end" class="b">32.185.680</text>
<text lengthAdjust="spacingAndGlyphs" x="1010.2" y="689.2" textLength="83.5" text-anchor="end" class="b">32.185.680</text>
<text lengthAdjust="spacingAndGlyphs" x="1199.3" y="689.2" textLength="83.5" text-anchor="end" class="b">32.185.680</text>
<text lengthAdjust="spacingAndGlyphs" x="1388.4" y="689.2" textLength="83.5" text-anchor="end" class="b">32.185.680</text>
<text lengthAdjust="spacingAndGlyphs" x="1577.5" y="689.2" textLength="92.7" text-anchor="end" class="b">128.742.718</text>
<text lengthAdjust="spacingAndGlyphs" x="44.8" y="714.3" textLength="110.6" class="b">Total Revenue</text>
<text lengthAdjust="spacingAndGlyphs" x="404.2" y="714.3" textLength="9.4" text-anchor="middle" class="b i" color="#222">€</text>
<text lengthAdjust="spacingAndGlyphs" x="632.0" y="714.3" textLength="106.8" text-anchor="end" class="b">5.224.598.013</text>
<text lengthAdjust="spacingAndGlyphs" x="821.1" y="714.3" textLength="92.7" text-anchor="end" class="b">227.187.036</text>
<text lengthAdjust="spacingAndGlyphs" x="1010.2" y="714.3" textLength="92.7" text-anchor="end" class="b">227.187.036</text>
<text lengthAdjust="spacingAndGlyphs" x="1199.3" y="714.3" textLength="92.7" text-anchor="end" class="b">227.187.036</text>
<text lengthAdjust="spacingAndGlyphs" x="1388.4" y="714.3" textLength="92.7" text-anchor="end" class="b">227.187.036</text>
<text lengthAdjust="spacingAndGlyphs" x="1577.5" y="714.3" textLength="92.7" text-anchor="end" class="b">908.748.142</text>
<text lengthAdjust="spacingAndGlyphs" x="44.8" y="739.4" textLength="152.5" class="b">Operating Expenses</text>
<text lengthAdjust="spacingAndGlyphs" x="57.0" y="751.9" textLength="52.6">Payroll</text>
<text lengthAdjust="spacingAndGlyphs" x="404.2" y="751.9" textLength="9.4" text-anchor="middle" class="i" color="#222">€</text>
<text lengthAdjust="spacingAndGlyphs" x="632.0" y="751.9" textLength="103.5" text-anchor="end">(278.201.627)</text>
<text lengthAdjust="spacingAndGlyphs" x="821.1" y="751.9" textLength="94.3" text-anchor="end">(13.163.605)</text>
<text lengthAdjust="spacingAndGlyphs" x="1010.2" y="751.9" textLength="94.3" text-anchor="end">(13.163.605)</text>
<text lengthAdjust="spacingAndGlyphs" x="1199.3" y="751.9" textLength="94.3" text-anchor="end">(13.163.605)</text>
<text lengthAdjust="spacingAndGlyphs" x="1388.4" y="751.9" textLength="94.3" text-anchor="end">(13.163.605)</text>
<text lengthAdjust="spacingAndGlyphs" x="1577.5" y="751.9" textLength="94.3" text-anchor="end">(52.654.421)</text>
<text lengthAdjust="spacingAndGlyphs" x="57.0" y="764.4" textLength="179.4">Airport Authority Taxes</text>
<text lengthAdjust="spacingAndGlyphs" x="404.2" y="764.4" textLength="9.4" text-anchor="middle" class="i" color="#222">€</text>
<text lengthAdjust="spacingAndGlyphs" x="632.0" y="764.4" textLength="103.5" text-anchor="end">(135.545.732)</text>
<text lengthAdjust="spacingAndGlyphs" x="821.1" y="764.4" textLength="85.0" text-anchor="end">(5.850.041)</text>
<text lengthAdjust="spacingAndGlyphs" x="1010.2" y="764.4" textLength="85.0" text-anchor="end">(5.850.041)</text>
<text lengthAdjust="spacingAndGlyphs" x="1199.3" y="764.4" textLength="85.0" text-anchor="end">(5.850.041)</text>
<text lengthAdjust="spacingAndGlyphs" x="1388.4" y="764.4" textLength="85.0" text-anchor="end">(5.850.041)</text>
<text lengthAdjust="spacingAndGlyphs" x="1577.5" y="764.4" textLength="94.3" text-anchor="end">(23.400.163)</text>
<text lengthAdjust="spacingAndGlyphs" x="57.0" y="777.0" textLength="156.2">Contractual Services</text>
<text lengthAdjust="spacingAndGlyphs" x="404.2" y="777.0" textLength="9.4" text-anchor="middle" class="i" color="#222">€</text>
<text lengthAdjust="spacingAndGlyphs" x="632.0" y="777.0" textLength="117.4" text-anchor="end">(1.129.547.770)</text>
<text lengthAdjust="spacingAndGlyphs" x="821.1" y="777.0" textLength="94.3" text-anchor="end">(48.750.339)</text>
<text lengthAdjust="spacingAndGlyphs" x="1010.2" y="777.0" textLength="94.3" text-anchor="end">(48.750.339)</text>
<text lengthAdjust="spacingAndGlyphs" x="1199.3" y="777.0" textLength="94.3" text-anchor="end">(48.750.339)</text>
<text lengthAdjust="spacingAndGlyphs" x="1388.4" y="777.0" textLength="94.3" text-anchor="end">(48.750.339)</text>
<text lengthAdjust="spacingAndGlyphs" x="1577.5" y="777.0" textLength="103.5" text-anchor="end">(195.001.356)</text>
<text lengthAdjust="spacingAndGlyphs" x="57.0" y="789.5" textLength="79.3">Marketing</text>
<text lengthAdjust="spacingAndGlyphs" x="404.2" y="789.5" textLength="9.4" text-anchor="middle" class="i" color="#222">€</text>
<text lengthAdjust="spacingAndGlyphs" x="632.0" y="789.5" textLength="94.3" text-anchor="end">(45.181.911)</text>
<text lengthAdjust="spacingAndGlyphs" x="821.1" y="789.5" textLength="85.0" text-anchor="end">(1.950.014)</text>
<text lengthAdjust="spacingAndGlyphs" x="1010.2" y="789.5" textLength="85.0" text-anchor="end">(1.950.014)</text>
<text lengthAdjust="spacingAndGlyphs" x="1199.3" y="789.5" textLength="85.0" text-anchor="end">(1.950.014)</text>
<text lengthAdjust="spacingAndGlyphs" x="1388.4" y="789.5" textLength="85.0" text-anchor="end">(1.950.014)</text>
<text lengthAdjust="spacingAndGlyphs" x="1577.5" y="789.5" textLength="85.0" text-anchor="end">(7.800.054)</text>
<text lengthAdjust="spacingAndGlyphs" x="57.0" y="802.0" textLength="58.9">Utilities</text>
<text lengthAdjust="spacingAndGlyphs" x="404.2" y="802.0" textLength="9.4" text-anchor="middle" class="i" color="#222">€</text>
<text lengthAdjust="spacingAndGlyphs" x="632.0" y="802.0" textLength="103.5" text-anchor="end">(135.545.732)</text>
<text lengthAdjust="spacingAndGlyphs" x="821.1" y="802.0" textLength="85.0" text-anchor="end">(5.850.041)</text>
<text lengthAdjust="spacingAndGlyphs" x="1010.2" y="802.0" textLength="85.0" text-anchor="end">(5.850.041)</text>
<text lengthAdjust="spacingAndGlyphs" x="1199.3" y="802.0" textLength="85.0" text-anchor="end">(5.850.041)</text>
<text lengthAdjust="spacingAndGlyphs" x="1388.4" y="802.0" textLength="85.0" text-anchor="end">(5.850.041)</text>
<text lengthAdjust="spacingAndGlyphs" x="1577.5" y="802.0" textLength="94.3" text-anchor="end">(23.400.163)</text>
<text lengthAdjust="spacingAndGlyphs" x="57.0" y="814.6" textLength="101.5">Maintenance</text>
<text lengthAdjust="spacingAndGlyphs" x="404.2" y="814.6" textLength="9.4" text-anchor="middle" class="i" color="#222">€</text>
<text lengthAdjust="spacingAndGlyphs" x="632.0" y="814.6" textLength="103.5" text-anchor="end">(316.273.376)</text>
<text lengthAdjust="spacingAndGlyphs" x="821.1" y="814.6" textLength="94.3" text-anchor="end">(13.650.095)</text>
<text lengthAdjust="spacingAndGlyphs" x="1010.2" y="814.6" textLength="94.3" text-anchor="end">(13.650.095)</text>
<text lengthAdjust="spacingAndGlyphs" x="1199.3" y="814.6" textLength="94.3" text-anchor="end">(13.650.095)</text>
<text lengthAdjust="spacingAndGlyphs" x="1388.4" y="814.6" textLength="94.3" text-anchor="end">(13.650.095)</text>
<text lengthAdjust="spacingAndGlyphs" x="1577.5" y="814.6" textLength="94.3" text-anchor="end">(54.600.380)</text>
<text lengthAdjust="spacingAndGlyphs" x="57.0" y="827.1" textLength="158.0">Materials &amp; Supplies</text>
<text lengthAdjust="spacingAndGlyphs" x="404.2" y="827.1" textLength="9.4" text-anchor="middle" class="i" color="#222">€</text>
<text lengthAdjust="spacingAndGlyphs" x="632.0" y="827.1" textLength="94.3" text-anchor="end">(67.772.866)</text>
<text lengthAdjust="spacingAndGlyphs" x="821.1" y="827.1" textLength="85.0" text-anchor="end">(2.925.020)</text>
<text lengthAdjust="spacingAndGlyphs" x="1010.2" y="827.1" textLength="85.0" text-anchor="end">(2.925.020)</text>
<text lengthAdjust="spacingAndGlyphs" x="1199.3" y="827.1" textLength="85.0" text-anchor="end">(2.925.020)</text>
<text lengthAdjust="spacingAndGlyphs" x="1388.4" y="827.1" textLength="85.0" text-anchor="end">(2.925.020)</text>
<text lengthAdjust="spacingAndGlyphs" x="1577.5" y="827.1" textLength="94.3" text-anchor="end">(11.700.081)</text>
<text lengthAdjust="spacingAndGlyphs" x="57.0" y="839.6" textLength="44.8">Other</text>
<text lengthAdjust="spacingAndGlyphs" x="404.2" y="839.6" textLength="9.4" text-anchor="middle" class="i" color="#222">€</text>
<text lengthAdjust="spacingAndGlyphs" x="632.0" y="839.6" textLength="94.3" text-anchor="end">(45.181.911)</text>
<text lengthAdjust="spacingAndGlyphs" x="821.1" y="839.6" textLength="85.0" text-anchor="end">(1.950.014)</text>
<text lengthAdjust="spacingAndGlyphs" x="1010.2" y="839.6" textLength="85.0" text-anchor="end">(1.950.014)</text>
<text lengthAdjust="spacingAndGlyphs" x="1199.3" y="839.6" textLength="85.0" text-anchor="end">(1.950.014)</text>
<text lengthAdjust="spacingAndGlyphs" x="1388.4" y="839.6" textLength="85.0" text-anchor="end">(1.950.014)</text>
<text lengthAdjust="spacingAndGlyphs" x="1577.5" y="839.6" textLength="85.0" text-anchor="end">(7.800.054)</text>
<text lengthAdjust="spacingAndGlyphs" x="57.0" y="852.2" textLength="114.6">Property Taxes</text>
<text lengthAdjust="spacingAndGlyphs" x="404.2" y="852.2" textLength="9.4" text-anchor="middle" class="i" color="#222">€</text>
<text lengthAdjust="spacingAndGlyphs" x="632.0" y="852.2" textLength="103.5" text-anchor="end">(166.273.560)</text>
<text lengthAdjust="spacingAndGlyphs" x="821.1" y="852.2" textLength="85.0" text-anchor="end">(6.263.730)</text>
<text lengthAdjust="spacingAndGlyphs" x="1010.2" y="852.2" textLength="85.0" text-anchor="end">(6.263.730)</text>
<text lengthAdjust="spacingAndGlyphs" x="1199.3" y="852.2" textLength="85.0" text-anchor="end">(6.263.730)</text>
<text lengthAdjust="spacingAndGlyphs" x="1388.4" y="852.2" textLength="85.0" text-anchor="end">(6.263.730)</text>
<text lengthAdjust="spacingAndGlyphs" x="1577.5" y="852.2" textLength="94.3" text-anchor="end">(25.054.920)</text>
<text lengthAdjust="spacingAndGlyphs" x="44.8" y="864.7" textLength="196.0" class="b">Total Operating Expenses</text>
<text lengthAdjust="spacingAndGlyphs" x="404.2" y="864.7" textLength="9.4" text-anchor="middle" class="b i" color="#222">€</text>
<text lengthAdjust="spacingAndGlyphs" x="632.0" y="864.7" textLength="118.2" text-anchor="end" class="b">(2.319.524.486)</text>
<text lengthAdjust="spacingAndGlyphs" x="821.1" y="864.7" textLength="104.1" text-anchor="end" class="b">(100.352.898)</text>
<text lengthAdjust="spacingAndGlyphs" x="1010.2" y="864.7" textLength="104.1" text-anchor="end" class="b">(100.352.898)</text>
<text lengthAdjust="spacingAndGlyphs" x="1199.3" y="864.7" textLength="104.1" text-anchor="end" class="b">(100.352.898)</text>
<text lengthAdjust="spacingAndGlyphs" x="1388.4" y="864.7" textLength="104.1" text-anchor="end" class="b">(100.352.898)</text>
<text lengthAdjust="spacingAndGlyphs" x="1577.5" y="864.7" textLength="104.1" text-anchor="end" class="b">(401.411.592)</text>
<text lengthAdjust="spacingAndGlyphs" x="44.8" y="889.8" textLength="170.8" class="b">Net Operating Income</text>
<text lengthAdjust="spacingAndGlyphs" x="404.2" y="889.8" textLength="9.4" text-anchor="middle" class="b i" color="#222">€</text>
<text lengthAdjust="spacingAndGlyphs" x="632.0" y="889.8" textLength="106.8" text-anchor="end" class="b">2.905.073.528</text>
<text lengthAdjust="spacingAndGlyphs" x="821.1" y="889.8" textLength="92.7" text-anchor="end" class="b">126.834.137</text>
<text lengthAdjust="spacingAndGlyphs" x="1010.2" y="889.8" textLength="92.7" text-anchor="end" class="b">126.834.137</text>
<text lengthAdjust="spacingAndGlyphs" x="1199.3" y="889.8" textLength="92.7" text-anchor="end" class="b">126.834.137</text>
<text lengthAdjust="spacingAndGlyphs" x="1388.4" y="889.8" textLength="92.7" text-anchor="end" class="b">126.834.137</text>
<text lengthAdjust="spacingAndGlyphs" x="1577.5" y="889.8" textLength="92.7" text-anchor="end" class="b">507.336.550</text>
<text lengthAdjust="spacingAndGlyphs" x="57.0" y="914.8" textLength="191.8">CapEx During Operations</text>
<text lengthAdjust="spacingAndGlyphs" x="404.2" y="914.8" textLength="9.4" text-anchor="middle" class="i" color="#222">€</text>
<text lengthAdjust="spacingAndGlyphs" x="632.0" y="914.8" textLength="94.3" text-anchor="end">(52.245.980)</text>
<text lengthAdjust="spacingAndGlyphs" x="821.1" y="914.8" textLength="85.0" text-anchor="end">(2.271.870)</text>
<text lengthAdjust="spacingAndGlyphs" x="1010.2" y="914.8" textLength="85.0" text-anchor="end">(2.271.870)</text>
<text lengthAdjust="spacingAndGlyphs" x="1199.3" y="914.8" textLength="85.0" text-anchor="end">(2.271.870)</text>
<text lengthAdjust="spacingAndGlyphs" x="1388.4" y="914.8" textLength="85.0" text-anchor="end">(2.271.870)</text>
<text lengthAdjust="spacingAndGlyphs" x="1577.5" y="914.8" textLength="85.0" text-anchor="end">(9.087.481)</text>
<text lengthAdjust="spacingAndGlyphs" x="44.8" y="939.9" textLength="206.4" class="b">Net Cash Flow before Debt</text>
<text lengthAdjust="spacingAndGlyphs" x="404.2" y="939.9" textLength="9.4" text-anchor="middle" class="b i" color="#222">€</text>
<text lengthAdjust="spacingAndGlyphs" x="632.0" y="939.9" textLength="106.8" text-anchor="end" class="b">2.852.827.547</text>
<text lengthAdjust="spacingAndGlyphs" x="821.1" y="939.9" textLength="92.7" text-anchor="end" class="b">124.562.267</text>
<text lengthAdjust="spacingAndGlyphs" x="1010.2" y="939.9" textLength="92.7" text-anchor="end" class="b">124.562.267</text>
<text lengthAdjust="spacingAndGlyphs" x="1199.3" y="939.9" textLength="92.7" text-anchor="end" class="b">124.562.267</text>
<text lengthAdjust="spacingAndGlyphs" x="1388.4" y="939.9" textLength="92.7" text-anchor="end" class="b">124.562.267</text>
<text lengthAdjust="spacingAndGlyphs" x="1577.5" y="939.9" textLength="92.7" text-anchor="end" class="b">498.249.068</text>
<text lengthAdjust="spacingAndGlyphs" x="44.8" y="965.0" textLength="96.7" class="b">Debt Service</text>
<text lengthAdjust="spacingAndGlyphs" x="57.0" y="977.5" textLength="60.1">Interest</text>
<text lengthAdjust="spacingAndGlyphs" x="404.2" y="977.5" textLength="9.4" text-anchor="middle" class="i" color="#222">€</text>
<text lengthAdjust="spacingAndGlyphs" x="632.0" y="977.5" textLength="103.5" text-anchor="end">(306.698.883)</text>
<text lengthAdjust="spacingAndGlyphs" x="821.1" y="977.5" textLength="85.0" text-anchor="end">(9.332.071)</text>
<text lengthAdjust="spacingAndGlyphs" x="1010.2" y="977.5" textLength="85.0" text-anchor="end">(9.170.268)</text>
<text lengthAdjust="spacingAndGlyphs" x="1199.3" y="977.5" textLength="85.0" text-anchor="end">(9.006.639)</text>
<text lengthAdjust="spacingAndGlyphs" x="1388.4" y="977.5" textLength="85.0" text-anchor="end">(8.841.161)</text>
<text lengthAdjust="spacingAndGlyphs" x="1577.5" y="977.5" textLength="94.3" text-anchor="end">(36.350.139)</text>
<text lengthAdjust="spacingAndGlyphs" x="57.0" y="990.0" textLength="66.3">Principal</text>
<text lengthAdjust="spacingAndGlyphs" x="404.2" y="990.0" textLength="9.4" text-anchor="middle" class="i" color="#222">€</text>
<text lengthAdjust="spacingAndGlyphs" x="632.0" y="990.0" textLength="103.5" text-anchor="end">(310.578.304)</text>
<text lengthAdjust="spacingAndGlyphs" x="821.1" y="990.0" textLength="94.3" text-anchor="end">(14.328.643)</text>
<text lengthAdjust="spacingAndGlyphs" x="1010.2" y="990.0" textLength="94.3" text-anchor="end">(14.490.445)</text>
<text lengthAdjust="spacingAndGlyphs" x="1199.3" y="990.0" textLength="94.3" text-anchor="end">(14.654.075)</text>
<text lengthAdjust="spacingAndGlyphs" x="1388.4" y="990.0" textLength="94.3" text-anchor="end">(14.819.552)</text>
<text lengthAdjust="spacingAndGlyphs" x="1577.5" y="990.0" textLength="94.3" text-anchor="end">(58.292.715)</text>
<text lengthAdjust="spacingAndGlyphs" x="44.8" y="1002.5" textLength="140.2" class="b">Total Debt Service</text>
<text lengthAdjust="spacingAndGlyphs" x="404.2" y="1002.5" textLength="9.4" text-anchor="middle" class="b i" color="#222">€</text>
<text lengthAdjust="spacingAndGlyphs" x="632.0" y="1002.5" textLength="104.1" text-anchor="end" class="b">(617.277.187)</text>
<text lengthAdjust="spacingAndGlyphs" x="821.1" y="1002.5" textLength="94.9" text-anchor="end" class="b">(23.660.713)</text>
<text lengthAdjust="spacingAndGlyphs" x="1010.2" y="1002.5" textLength="94.9" text-anchor="end" class="b">(23.660.713)</text>
<text lengthAdjust="spacingAndGlyphs" x="1199.3" y="1002.5" textLength="94.9" text-anchor="end" class="b">(23.660.713)</text>
<text lengthAdjust="spacingAndGlyphs" x="1388.4" y="1002.5" textLength="94.9" text-anchor="end" class="b">(23.660.713)</text>
<text lengthAdjust="spacingAndGlyphs" x="1577.5" y="1002.5" textLength="94.9" text-anchor="end" class="b">(94.642.854)</text>
<text lengthAdjust="spacingAndGlyphs" x="44.8" y="1027.6" textLength="195.9" class="b">Net Cash Flow before Tax</text>
<text lengthAdjust="spacingAndGlyphs" x="404.2" y="1027.6" textLength="9.4" text-anchor="middle" class="b i" color="#222">€</text>
<text lengthAdjust="spacingAndGlyphs" x="632.0" y="1027.6" textLength="92.7" text-anchor="end" class="b">293.104.560</text>
<text lengthAdjust="spacingAndGlyphs" x="821.1" y="1027.6" textLength="92.7" text-anchor="end" class="b">100.901.554</text>
<text lengthAdjust="spacingAndGlyphs" x="1010.2" y="1027.6" textLength="92.7" text-anchor="end" class="b">100.901.554</text>
<text lengthAdjust="spacingAndGlyphs" x="1199.3" y="1027.6" textLength="92.7" text-anchor="end" class="b">100.901.554</text>
<text lengthAdjust="spacingAndGlyphs" x="1388.4" y="1027.6" textLength="92.7" text-anchor="end" class="b">100.901.554</text>
<text lengthAdjust="spacingAndGlyphs" x="1577.5" y="1027.6" textLength="92.7" text-anchor="end" class="b">403.606.214</text>
<text lengthAdjust="spacingAndGlyphs" x="57.0" y="1052.7" textLength="104.7">Income Taxes</text>
<text lengthAdjust="spacingAndGlyphs" x="404.2" y="1052.7" textLength="9.4" text-anchor="middle" class="i" color="#222">€</text>
<text lengthAdjust="spacingAndGlyphs" x="632.0" y="1052.7" textLength="103.5" text-anchor="end">(563.521.192)</text>
<text lengthAdjust="spacingAndGlyphs" x="820.9" y="1051.9" textLength="5.7" text-anchor="end" class="d" color="#4a4a4a">-</text>
<text lengthAdjust="spacingAndGlyphs" x="1010.0" y="1051.9" textLength="5.7" text-anchor="end" class="d" color="#4a4a4a">-</text>
<text lengthAdjust="spacingAndGlyphs" x="1199.1" y="1051.9" textLength="5.7" text-anchor="end" class="d" color="#4a4a4a">-</text>
<text lengthAdjust="spacingAndGlyphs" x="1388.4" y="1052.7" textLength="103.5" text-anchor="end">(103.560.468)</text>
<text lengthAdjust="spacingAndGlyphs" x="1577.5" y="1052.7" textLength="103.5" text-anchor="end">(103.560.468)</text>
<text lengthAdjust="spacingAndGlyphs" x="44.8" y="1077.7" textLength="182.2" class="b">Net Cash Flow after Tax</text>
<text lengthAdjust="spacingAndGlyphs" x="404.2" y="1077.7" textLength="9.4" text-anchor="middle" class="b i" color="#222">€</text>
<text lengthAdjust="spacingAndGlyphs" x="632.0" y="1077.7" textLength="104.1" text-anchor="end" class="b">(270.416.631)</text>
<text lengthAdjust="spacingAndGlyphs" x="821.1" y="1077.7" textLength="92.7" text-anchor="end" class="b">100.901.554</text>
<text lengthAdjust="spacingAndGlyphs" x="1010.2" y="1077.7" textLength="92.7" text-anchor="end" class="b">100.901.554</text>
<text lengthAdjust="spacingAndGlyphs" x="1199.3" y="1077.7" textLength="92.7" text-anchor="end" class="b">100.901.554</text>
<text lengthAdjust="spacingAndGlyphs" x="1388.4" y="1077.7" textLength="85.6" text-anchor="end" class="b">(2.658.914)</text>
<text lengthAdjust="spacingAndGlyphs" x="1577.5" y="1077.7" textLength="92.7" text-anchor="end" class="b">300.045.747</text>
<text lengthAdjust="spacingAndGlyphs" x="44.8" y="1102.8" textLength="110.2" class="b u">Cumulative CF</text>
<text lengthAdjust="spacingAndGlyphs" x="44.8" y="1115.3" textLength="170.1" class="b">Opening Cash Balance</text>
<text lengthAdjust="spacingAndGlyphs" x="404.2" y="1115.3" textLength="9.4" text-anchor="middle" class="i" color="#222">€</text>
<text lengthAdjust="spacingAndGlyphs" x="631.8" y="1114.5" textLength="5.7" text-anchor="end" class="b d" color="#1a1a1a">-</text>
<text lengthAdjust="spacingAndGlyphs" x="821.1" y="1115.3" textLength="106.8" text-anchor="end" class="b">1.672.029.169</text>
<text lengthAdjust="spacingAndGlyphs" x="1010.2" y="1115.3" textLength="106.8" text-anchor="end" class="b">1.772.930.722</text>
<text lengthAdjust="spacingAndGlyphs" x="1199.3" y="1115.3" textLength="106.8" text-anchor="end" class="b">1.873.832.276</text>
<text lengthAdjust="spacingAndGlyphs" x="1388.4" y="1115.3" textLength="106.8" text-anchor="end" class="b">1.974.733.830</text>
<text lengthAdjust="spacingAndGlyphs" x="1577.5" y="1115.3" textLength="106.8" text-anchor="end" class="b">1.672.029.169</text>
<text lengthAdjust="spacingAndGlyphs" x="57.0" y="1127.9" textLength="181.6">Net Cash Flow after Tax</text>
<text lengthAdjust="spacingAndGlyphs" x="404.2" y="1127.9" textLength="9.4" text-anchor="middle" class="i" color="#222">€</text>
<text lengthAdjust="spacingAndGlyphs" x="632.0" y="1127.9" textLength="103.5" text-anchor="end">(270.416.631)</text>
<text lengthAdjust="spacingAndGlyphs" x="821.1" y="1127.9" textLength="92.5" text-anchor="end">100.901.554</text>
<text lengthAdjust="spacingAndGlyphs" x="1010.2" y="1127.9" textLength="92.5" text-anchor="end">100.901.554</text>
<text lengthAdjust="spacingAndGlyphs" x="1199.3" y="1127.9" textLength="92.5" text-anchor="end">100.901.554</text>
<text lengthAdjust="spacingAndGlyphs" x="1388.4" y="1127.9" textLength="85.0" text-anchor="end">(2.658.914)</text>
<text lengthAdjust="spacingAndGlyphs" x="1577.5" y="1127.9" textLength="92.5" text-anchor="end">300.045.747</text>
<text lengthAdjust="spacingAndGlyphs" x="57.0" y="1140.4" textLength="101.4">Equity Issued</text>
<text lengthAdjust="spacingAndGlyphs" x="404.2" y="1140.4" textLength="9.4" text-anchor="middle" class="i" color="#222">€</text>
<text lengthAdjust="spacingAndGlyphs" x="632.0" y="1140.4" textLength="92.5" text-anchor="end">797.585.800</text>
<text lengthAdjust="spacingAndGlyphs" x="820.9" y="1139.6" textLength="5.7" text-anchor="end" class="d" color="#4a4a4a">-</text>
<text lengthAdjust="spacingAndGlyphs" x="1010.0" y="1139.6" textLength="5.7" text-anchor="end" class="d" color="#4a4a4a">-</text>
<text lengthAdjust="spacingAndGlyphs" x="1199.1" y="1139.6" textLength="5.7" text-anchor="end" class="d" color="#4a4a4a">-</text>
<text lengthAdjust="spacingAndGlyphs" x="1388.2" y="1139.6" textLength="5.7" text-anchor="end" class="d" color="#4a4a4a">-</text>
<text lengthAdjust="spacingAndGlyphs" x="1577.3" y="1139.6" textLength="5.7" text-anchor="end" class="d" color="#4a4a4a">-</text>
<text lengthAdjust="spacingAndGlyphs" x="57.0" y="1152.9" textLength="90.4">Debt Issued</text>
<text lengthAdjust="spacingAndGlyphs" x="404.2" y="1152.9" textLength="9.4" text-anchor="middle" class="i" color="#222">€</text>
<text lengthAdjust="spacingAndGlyphs" x="632.0" y="1152.9" textLength="106.3" text-anchor="end">1.144.860.000</text>
<text lengthAdjust="spacingAndGlyphs" x="820.9" y="1152.1" textLength="5.7" text-anchor="end" class="d" color="#4a4a4a">-</text>
<text lengthAdjust="spacingAndGlyphs" x="1010.0" y="1152.1" textLength="5.7" text-anchor="end" class="d" color="#4a4a4a">-</text>
<text lengthAdjust="spacingAndGlyphs" x="1199.1" y="1152.1" textLength="5.7" text-anchor="end" class="d" color="#4a4a4a">-</text>
<text lengthAdjust="spacingAndGlyphs" x="1388.2" y="1152.1" textLength="5.7" text-anchor="end" class="d" color="#4a4a4a">-</text>
<text lengthAdjust="spacingAndGlyphs" x="1577.3" y="1152.1" textLength="5.7" text-anchor="end" class="d" color="#4a4a4a">-</text>
<text lengthAdjust="spacingAndGlyphs" x="44.8" y="1165.5" textLength="160.1" class="b">Closing Cash Balance</text>
<text lengthAdjust="spacingAndGlyphs" x="404.2" y="1165.5" textLength="9.4" text-anchor="middle" class="b i" color="#222">€</text>
<text lengthAdjust="spacingAndGlyphs" x="632.0" y="1165.5" textLength="106.8" text-anchor="end" class="b">1.672.029.169</text>
<text lengthAdjust="spacingAndGlyphs" x="821.1" y="1165.5" textLength="106.8" text-anchor="end" class="b">1.772.930.722</text>
<text lengthAdjust="spacingAndGlyphs" x="1010.2" y="1165.5" textLength="106.8" text-anchor="end" class="b">1.873.832.276</text>
<text lengthAdjust="spacingAndGlyphs" x="1199.3" y="1165.5" textLength="106.8" text-anchor="end" class="b">1.974.733.830</text>
<text lengthAdjust="spacingAndGlyphs" x="1388.4" y="1165.5" textLength="106.8" text-anchor="end" class="b">1.972.074.916</text>
<text lengthAdjust="spacingAndGlyphs" x="1577.5" y="1165.5" textLength="106.8" text-anchor="end" class="b">1.972.074.916</text>
<text lengthAdjust="spacingAndGlyphs" x="24.0" y="6.5" textLength="287.0" font-size="5.6" color="#cfcfcf">© Profit Vision Financial Services. All rights reserved.</text>
<text lengthAdjust="spacingAndGlyphs" x="802.0" y="44.8" textLength="611.5" text-anchor="middle" font-size="16.2" color="#fff">Airport Development Financial Model</text>
<text lengthAdjust="spacingAndGlyphs" x="85.3" y="28.0" textLength="28.6" text-anchor="middle" class="b" font-size="7.7" color="#fff0b8">Top</text>
<text lengthAdjust="spacingAndGlyphs" x="85.3" y="46.8" textLength="45.2" text-anchor="middle" class="b" font-size="7.7" color="#fff">Home</text>
<text lengthAdjust="spacingAndGlyphs" x="33.0" y="69.8" textLength="144.5" class="b" font-size="6.6" color="#fff">All Amounts in  EUR (€)</text>
<text lengthAdjust="spacingAndGlyphs" x="21.4" y="85.4" textLength="322.2" class="b" font-size="10.8" color="#fff">Quarterly Cash Flow per Year</text>
<text lengthAdjust="spacingAndGlyphs" x="21.4" y="161.8" textLength="172.7" class="b" font-size="9.3" color="#fff">Project Cash Flow</text>
<text lengthAdjust="spacingAndGlyphs" x="44.8" y="175.0" textLength="302.7" class="b" color="#fff">Development Costs &amp; Startup Expenses</text>
<text lengthAdjust="spacingAndGlyphs" x="44.8" y="350.9" textLength="85.7" class="b" color="#fff">Operations</text>
<text lengthAdjust="spacingAndGlyphs" x="83.0" y="111.2" textLength="97.0" class="b i" font-size="8.6">Current Year</text>
<text lengthAdjust="spacingAndGlyphs" x="83.0" y="137.2" textLength="65.5" class="b i" font-size="8.6">Scenario</text>
<text lengthAdjust="spacingAndGlyphs" x="229.2" y="111.2" textLength="29.6" font-size="5.9" color="#333">2034</text>
<text lengthAdjust="spacingAndGlyphs" x="228.3" y="134.0" textLength="56.8" font-size="5.9" color="#333">Base Case</text>
<text lengthAdjust="spacingAndGlyphs" x="635.5" y="97.7" textLength="56.6" text-anchor="end" class="b i" font-size="7.2" color="#15151f">Quarter</text>
<text lengthAdjust="spacingAndGlyphs" x="635.5" y="110.6" textLength="30.5" text-anchor="end" class="b i" font-size="7.2" color="#15151f">BOP</text>
<text lengthAdjust="spacingAndGlyphs" x="635.5" y="123.6" textLength="29.2" text-anchor="end" class="b i" font-size="7.2" color="#15151f">EOP</text>
<text lengthAdjust="spacingAndGlyphs" x="635.5" y="136.0" textLength="102.5" text-anchor="end" class="b i" font-size="7.2" color="#15151f">Days in Period</text>
<text lengthAdjust="spacingAndGlyphs" x="823.9" y="99.0" textLength="35.0" text-anchor="end" class="b i" font-size="7.2" color="#15151f">Qrt 1</text>
<text lengthAdjust="spacingAndGlyphs" x="823.9" y="112.0" textLength="58.4" text-anchor="end" class="b i" font-size="7.2" color="#15151f">1-Jan-34</text>
<text lengthAdjust="spacingAndGlyphs" x="823.9" y="124.6" textLength="72.9" text-anchor="end" class="b i" font-size="7.2" color="#15151f">31-Mar-34</text>
<text lengthAdjust="spacingAndGlyphs" x="823.9" y="136.0" textLength="16.8" text-anchor="end" class="b i" font-size="7.2" color="#15151f">90</text>
<text lengthAdjust="spacingAndGlyphs" x="1013.0" y="99.0" textLength="35.0" text-anchor="end" class="b i" font-size="7.2" color="#15151f">Qrt 2</text>
<text lengthAdjust="spacingAndGlyphs" x="1013.0" y="112.0" textLength="60.1" text-anchor="end" class="b i" font-size="7.2" color="#15151f">1-Apr-34</text>
<text lengthAdjust="spacingAndGlyphs" x="1013.0" y="124.6" textLength="66.8" text-anchor="end" class="b i" font-size="7.2" color="#15151f">30-Jun-34</text>
<text lengthAdjust="spacingAndGlyphs" x="1013.0" y="136.0" textLength="16.8" text-anchor="end" class="b i" font-size="7.2" color="#15151f">91</text>
<text lengthAdjust="spacingAndGlyphs" x="1202.1" y="99.0" textLength="35.0" text-anchor="end" class="b i" font-size="7.2" color="#15151f">Qrt 3</text>
<text lengthAdjust="spacingAndGlyphs" x="1202.1" y="112.0" textLength="53.7" text-anchor="end" class="b i" font-size="7.2" color="#15151f">1-Jul-34</text>
<text lengthAdjust="spacingAndGlyphs" x="1202.1" y="124.6" textLength="68.5" text-anchor="end" class="b i" font-size="7.2" color="#15151f">30-Sep-34</text>
<text lengthAdjust="spacingAndGlyphs" x="1202.1" y="136.0" textLength="16.8" text-anchor="end" class="b i" font-size="7.2" color="#15151f">92</text>
<text lengthAdjust="spacingAndGlyphs" x="1391.2" y="99.0" textLength="35.0" text-anchor="end" class="b i" font-size="7.2" color="#15151f">Qrt 4</text>
<text lengthAdjust="spacingAndGlyphs" x="1391.2" y="112.0" textLength="59.1" text-anchor="end" class="b i" font-size="7.2" color="#15151f">1-Oct-34</text>
<text lengthAdjust="spacingAndGlyphs" x="1391.2" y="124.6" textLength="69.3" text-anchor="end" class="b i" font-size="7.2" color="#15151f">31-Dec-34</text>
<text lengthAdjust="spacingAndGlyphs" x="1391.2" y="136.0" textLength="16.8" text-anchor="end" class="b i" font-size="7.2" color="#15151f">92</text>
<text lengthAdjust="spacingAndGlyphs" x="1580.3" y="99.0" textLength="70.7" text-anchor="end" class="b i" font-size="7.2" color="#15151f">Total Year</text>
<text lengthAdjust="spacingAndGlyphs" x="1580.3" y="112.0" textLength="58.4" text-anchor="end" class="b i" font-size="7.2" color="#15151f">1-Jan-34</text>
<text lengthAdjust="spacingAndGlyphs" x="1580.3" y="124.6" textLength="69.3" text-anchor="end" class="b i" font-size="7.2" color="#15151f">31-Dec-34</text>
<text lengthAdjust="spacingAndGlyphs" x="1580.3" y="136.0" textLength="25.2" text-anchor="end" class="b i" font-size="7.2" color="#15151f">365</text>
<text lengthAdjust="spacingAndGlyphs" x="545.0" y="148.6" textLength="83.7" text-anchor="middle" class="b" color="#fff">Prior Years</text>
<text lengthAdjust="spacingAndGlyphs" x="735.0" y="148.6" textLength="54.7" text-anchor="middle" class="b" color="#fff">Budget</text>
<text lengthAdjust="spacingAndGlyphs" x="924.1" y="148.6" textLength="54.7" text-anchor="middle" class="b" color="#fff">Budget</text>
<text lengthAdjust="spacingAndGlyphs" x="1113.2" y="148.6" textLength="54.7" text-anchor="middle" class="b" color="#fff">Budget</text>
<text lengthAdjust="spacingAndGlyphs" x="1302.3" y="148.6" textLength="54.7" text-anchor="middle" class="b" color="#fff">Budget</text>
</svg>
</body></html>
